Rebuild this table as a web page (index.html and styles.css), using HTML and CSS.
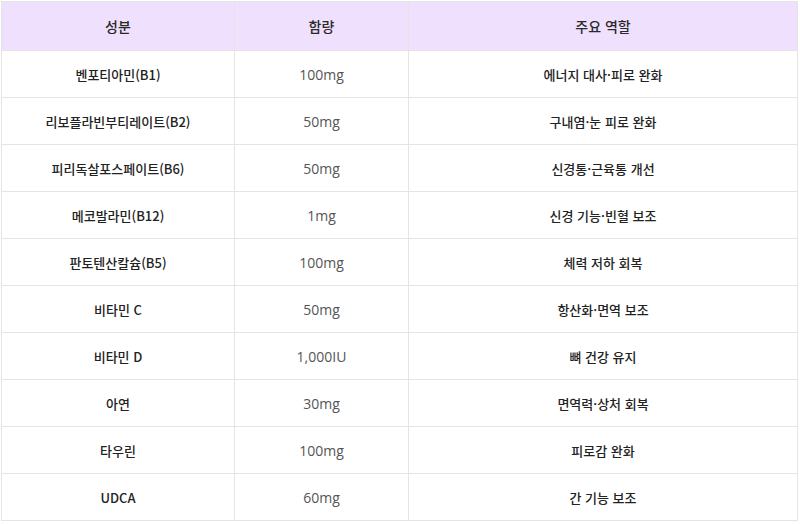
FILE: index.html
```html
<!DOCTYPE html>
<html lang="ko">
<head>
<meta charset="utf-8">
<link rel="stylesheet" href="styles.css">
</head>
<body>
<table class="tbl">
  <colgroup>
    <col class="c1"><col class="c2"><col class="c3">
  </colgroup>
  <thead>
    <tr><th>성분</th><th>함량</th><th>주요 역할</th></tr>
  </thead>
  <tbody>
    <tr><td class="name">벤포티아민(B1)</td><td class="amt">100mg</td><td class="role">에너지 대사·피로 완화</td></tr>
    <tr><td class="name">리보플라빈부티레이트(B2)</td><td class="amt">50mg</td><td class="role">구내염·눈 피로 완화</td></tr>
    <tr><td class="name">피리독살포스페이트(B6)</td><td class="amt">50mg</td><td class="role">신경통·근육통 개선</td></tr>
    <tr><td class="name">메코발라민(B12)</td><td class="amt">1mg</td><td class="role">신경 기능·빈혈 보조</td></tr>
    <tr><td class="name">판토텐산칼슘(B5)</td><td class="amt">100mg</td><td class="role">체력 저하 회복</td></tr>
    <tr><td class="name">비타민 C</td><td class="amt">50mg</td><td class="role">항산화·면역 보조</td></tr>
    <tr><td class="name">비타민 D</td><td class="amt">1,000IU</td><td class="role">뼈 건강 유지</td></tr>
    <tr><td class="name">아연</td><td class="amt">30mg</td><td class="role">면역력·상처 회복</td></tr>
    <tr><td class="name">타우린</td><td class="amt">100mg</td><td class="role">피로감 완화</td></tr>
    <tr><td class="name">UDCA</td><td class="amt">60mg</td><td class="role">간 기능 보조</td></tr>
  </tbody>
</table>
</body>
</html>
```

FILE: styles.css
```css
html, body {
  margin: 0;
  padding: 0;
  background: #ffffff;
}
body {
  padding: 1px;
  font-family: "Noto Sans CJK KR", "Noto Sans", sans-serif;
  font-size: 13px;
  color: #222;
}
.tbl {
  width: 796px;
  border-collapse: collapse;
  table-layout: fixed;
}
.c1 { width: 233px; }
.c2 { width: 174px; }
.c3 { width: 389px; }
.tbl th,
.tbl td {
  border: 1px solid #e4e4e4;
  text-align: center;
  vertical-align: middle;
  padding: 0;
}
.tbl th {
  height: 48px;
  background: #efe0fd;
  font-weight: 500;
  font-size: 14px;
  color: #2a2a2a;
}
.tbl td {
  height: 46px;
}
.name, .role {
  color: #222;
  font-weight: 500;
}
.amt {
  color: #555;
  font-family: "Open Sans", "Noto Sans CJK KR", sans-serif;
  font-size: 14px;
  font-weight: 400;
}
```
